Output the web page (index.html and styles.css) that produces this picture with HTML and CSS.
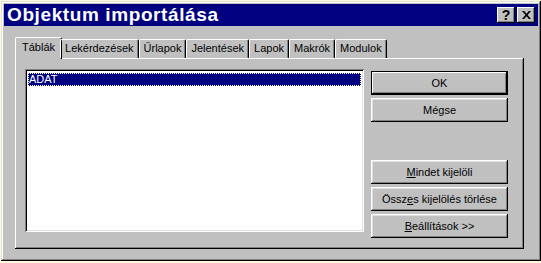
FILE: index.html
```html
<!DOCTYPE html>
<html lang="hu">
<head>
    <meta charset="UTF-8">
    <title>Objektum importálása</title>
    <link rel="stylesheet" href="styles.css">
</head>
<body>
    <div class="window">
        <div class="titlebar">
            <span class="title">Objektum importálása</span>
            <div class="title-buttons">
                <span class="tbtn help">?</span>
                <span class="tbtn close">
                    <svg width="9" height="8" viewBox="0 0 9 8">
                        <path d="M0 0h2.2l2.3 2.7L6.8 0H9L5.6 4 9 8H6.8L4.5 5.3 2.2 8H0l3.4-4z" fill="#000"/>
                    </svg>
                </span>
            </div>
        </div>

        <div class="content">
            <div class="tabs">
                <span class="tab active">Táblák</span>
                <span class="tab">Lekérdezések</span>
                <span class="tab">Űrlapok</span>
                <span class="tab">Jelentések</span>
                <span class="tab">Lapok</span>
                <span class="tab">Makrók</span>
                <span class="tab">Modulok</span>
            </div>

            <div class="panel">
                <div class="listbox">
                    <div class="item selected">ADAT</div>
                </div>
                <div class="actions">
                    <div class="group">
                        <button class="btn default">OK</button>
                        <button class="btn">Mégse</button>
                    </div>
                    <div class="group">
                        <button class="btn"><u>M</u>indet kijelöli</button>
                        <button class="btn">Össz<u>e</u>s kijelölés törlése</button>
                        <button class="btn"><u>B</u>eállítások &gt;&gt;</button>
                    </div>
                </div>
            </div>
        </div>
    </div>
</body>
</html>
```

FILE: styles.css
```css
body {
    margin: 0;
    background-color: #fdf7dc;
    font-family: "Liberation Sans", Arial, sans-serif;
    font-size: 11px;
    color: #000;
}
.window {
    box-sizing: border-box;
    width: 540px;
    height: 260px;
    margin: 1px 0 0 1px;
    padding: 3px;
    background-color: #c0c0c0;
    box-shadow: inset -1px -1px #000, inset 1px 1px #dfdfdf, inset -2px -2px #808080, inset 2px 2px #fff;
    display: flex;
    flex-direction: column;
}
.titlebar {
    height: 22px;
    background-color: #000080;
    color: #fff;
    display: flex;
    align-items: center;
    justify-content: space-between;
    padding: 0 3px 0 3px;
}
.title {
    font-weight: bold;
    font-size: 19px;
    letter-spacing: 0.6px;
}
.title-buttons {
    display: flex;
    gap: 2px;
}
.tbtn {
    width: 18px;
    height: 16px;
    background-color: #c0c0c0;
    box-shadow: inset -1px -1px #000, inset 1px 1px #fff, inset -2px -2px #808080;
    color: #000;
    display: flex;
    align-items: center;
    justify-content: center;
}
.help {
    font-weight: bold;
    font-size: 14px;
}
.content {
    flex: 1;
    padding: 11px 14px 9px 11px;
    display: flex;
    flex-direction: column;
}
.tabs {
    display: flex;
    align-items: flex-end;
    padding-left: 2px;
    position: relative;
    z-index: 1;
}
.tab {
    height: 18px;
    line-height: 17px;
    padding: 0 4px;
    border-top: 1px solid #fff;
    border-left: 1px solid #fff;
    border-right: 1px solid #000;
    box-shadow: inset -1px 0 #808080;
    border-radius: 2px 2px 0 0;
}
.tab.active {
    padding: 0 6px;
    margin: 0 -2px -1px -2px;
    background-color: #c0c0c0;
    height: 21px;
    line-height: 19px;
}
.panel {
    flex: 1;
    display: flex;
    gap: 7px;
    padding: 11px 16px 11px 10px;
    box-shadow: inset -1px -1px #000, inset 1px 1px #fff, inset -2px -2px #808080;
}
.listbox {
    flex: 1;
    background-color: #fff;
    padding: 4px 3px;
    margin-bottom: 6px;
    box-shadow: inset 1px 1px #808080, inset -1px -1px #fff, inset 2px 2px #000, inset -2px -2px #dfdfdf;
}
.item {
    height: 13px;
    line-height: 13px;
    padding-left: 1px;
}
.item.selected {
    background-color: #000080;
    color: #fff;
    outline: 1px dotted #fff;
    outline-offset: -1px;
}
.actions {
    width: 137px;
    display: flex;
    flex-direction: column;
    justify-content: space-between;
    padding-top: 2px;
}
.group {
    display: flex;
    flex-direction: column;
    gap: 3px;
}
.btn {
    height: 24px;
    border: none;
    background-color: #c0c0c0;
    font-family: inherit;
    font-size: 11px;
    color: #000;
    padding: 0;
    box-shadow: inset -1px -1px #000, inset 1px 1px #fff, inset -2px -2px #808080, inset 2px 2px #dfdfdf;
}
.btn.default {
    box-shadow: inset 0 0 0 1px #000, inset -2px -2px #000, inset 2px 2px #fff, inset -3px -3px #808080;
}
.btn u {
    text-decoration: underline;
}
```
